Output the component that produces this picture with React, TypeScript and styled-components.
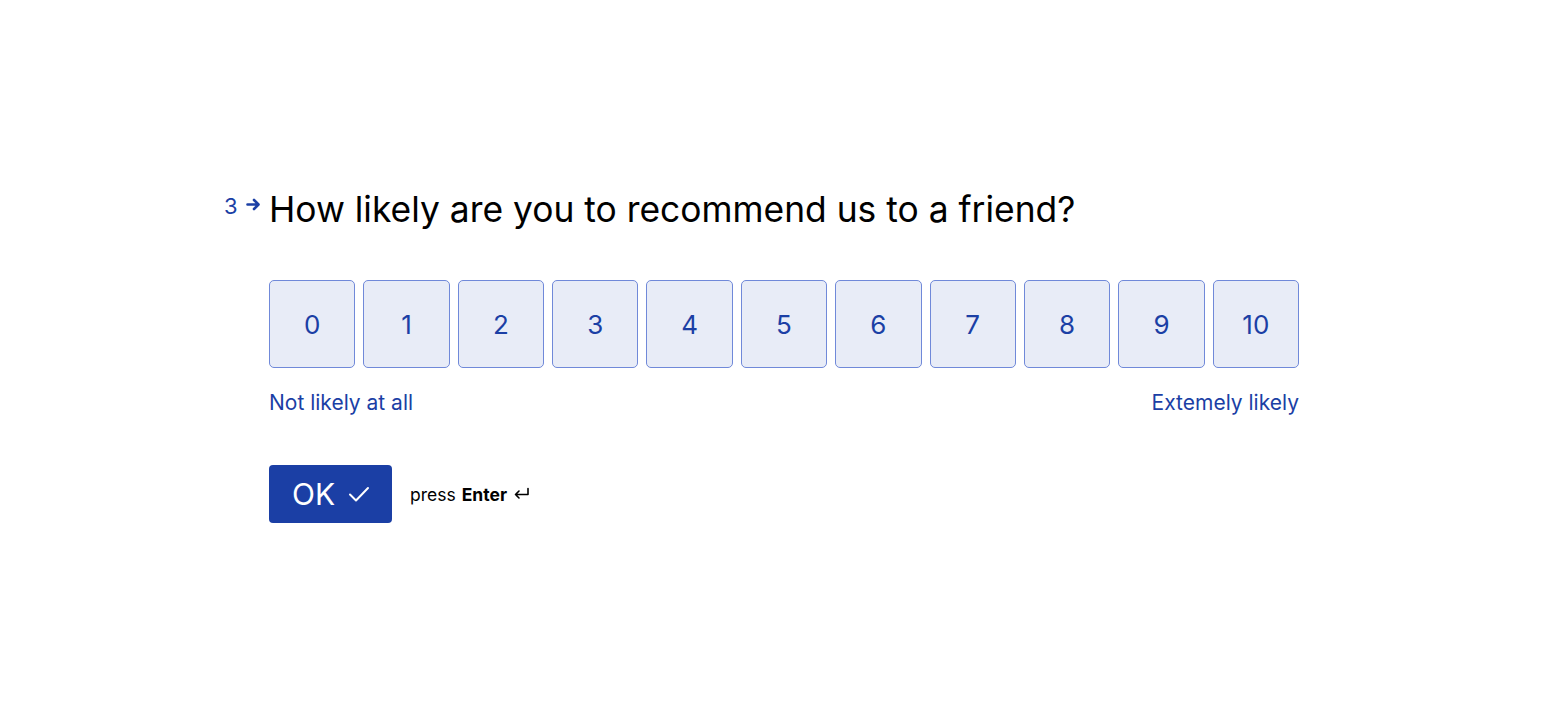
import React, { useState } from "react";
import styled, { createGlobalStyle } from "styled-components";

const GlobalStyle = createGlobalStyle`
  html, body {
    margin: 0;
    padding: 0;
    background: #ffffff;
    font-family: Inter, "Noto Sans", sans-serif;
  }
`;

const Page = styled.div`
  width: 1568px;
  height: 723px;
  display: flex;
  justify-content: flex-start;
  padding: 186px 0 0 269px;
  box-sizing: border-box;
`;

const Question = styled.div`
  width: 1030px;
  display: flex;
  flex-direction: column;
`;

const TitleRow = styled.div`
  position: relative;
  display: flex;
  align-items: center;
`;

const Counter = styled.div`
  position: absolute;
  left: -45px;
  top: 7px;
  display: flex;
  align-items: center;
  gap: 8px;
  color: #1b3fa5;
  font-size: 22px;
  line-height: 26px;

  svg {
    margin-top: -4px;
  }
`;

const Title = styled.h1`
  margin: 0;
  font-size: 35.4px;
  font-weight: 400;
  line-height: 48px;
  color: #000000;
`;

const Scale = styled.div`
  margin-top: 46px;
  display: grid;
  grid-template-columns: repeat(11, 1fr);
  gap: 8px;
`;

const Choice = styled.button<{ selected: boolean }>`
  height: 88px;
  border: 1px solid #7089d9;
  border-radius: 5px;
  background: ${({ selected }) => (selected ? "#c9d4f0" : "#e8ecf7")};
  color: #1b3fa5;
  font-family: inherit;
  font-size: 26px;
  padding: 0;
  cursor: pointer;
`;

const Legend = styled.div`
  margin-top: 21px;
  display: flex;
  justify-content: space-between;
  color: #1b3fa5;
  font-size: 21px;
  line-height: 28px;
`;

const Actions = styled.div`
  margin-top: 48px;
  display: flex;
  align-items: center;
  gap: 18px;
`;

const OkButton = styled.button`
  width: 123px;
  height: 58px;
  border: none;
  border-radius: 4px;
  background: #1b3fa5;
  color: #ffffff;
  font-family: inherit;
  font-size: 30px;
  display: flex;
  align-items: center;
  justify-content: center;
  gap: 12px;
  padding: 0 0 0 2px;
  cursor: pointer;
`;

const Hint = styled.span`
  font-size: 17.5px;
  color: #000000;
  display: flex;
  align-items: center;
  gap: 6px;

  b {
    font-weight: 700;
  }
`;

const ArrowRight = () => (
  <svg width="15" height="13" viewBox="0 0 15 13" fill="none">
    <path
      d="M1.5 6.5h10.5M8 2 12.5 6.5 8 11"
      stroke="#1b3fa5"
      strokeWidth="2.6"
      strokeLinecap="round"
      strokeLinejoin="round"
    />
  </svg>
);

const Check = () => (
  <svg width="24" height="24" viewBox="0 0 24 24" fill="none">
    <path
      d="M3 12.5 9 18.5 21 6"
      stroke="#ffffff"
      strokeWidth="2"
      strokeLinecap="round"
      strokeLinejoin="round"
    />
  </svg>
);

const EnterIcon = () => (
  <svg width="17" height="16" viewBox="0 0 17 16" fill="none">
    <path
      d="M15 2.5v6H2.5M6 5 2.5 8.5 6 12"
      stroke="#000000"
      strokeWidth="1.6"
      strokeLinecap="round"
      strokeLinejoin="round"
    />
  </svg>
);

const App: React.FC = () => {
  const [score, setScore] = useState<number | null>(null);

  return (
    <Page>
      <GlobalStyle />
      <Question>
        <TitleRow>
          <Counter>
            3<ArrowRight />
          </Counter>
          <Title>How likely are you to recommend us to a friend?</Title>
        </TitleRow>
        <Scale>
          {Array.from({ length: 11 }, (_, i) => (
            <Choice key={i} selected={score === i} onClick={() => setScore(i)}>
              {i}
            </Choice>
          ))}
        </Scale>
        <Legend>
          <span>Not likely at all</span>
          <span>Extemely likely</span>
        </Legend>
        <Actions>
          <OkButton>
            OK <Check />
          </OkButton>
          <Hint>
            press <b>Enter</b> <EnterIcon />
          </Hint>
        </Actions>
      </Question>
    </Page>
  );
};

export default App;
